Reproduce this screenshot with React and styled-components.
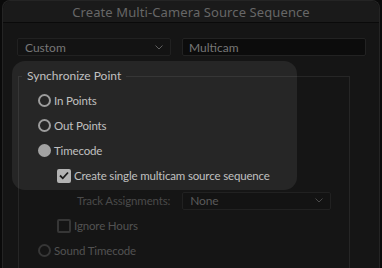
import React from "react";
import styled, { createGlobalStyle } from "styled-components";

const GlobalStyle = createGlobalStyle`
  html, body {
    margin: 0;
    padding: 0;
    background: #0a0a0a;
    font-family: Lato, "Noto Sans", sans-serif;
    overflow: hidden;
  }
`;

const Window = styled.div`
  position: relative;
  margin-left: 2px;
  width: 376px;
  height: 268px;
  background: #151515;
  border: 1px solid #242424;
  border-bottom: none;
  border-radius: 8px 8px 0 0;
  overflow: hidden;
`;

const TitleBar = styled.div`
  position: relative;
  z-index: 1;
  height: 21px;
  background: #1a1a1a;
  border-bottom: 1px solid #0a0a0a;
  border-radius: 8px 8px 0 0;
  display: flex;
  align-items: center;
  justify-content: center;
  color: #676767;
  font-family: "Noto Sans", sans-serif;
  font-size: 13px;
  letter-spacing: 0.1px;
`;

const Spotlight = styled.div`
  position: absolute;
  left: 9px;
  top: 60px;
  width: 285px;
  height: 129px;
  border-radius: 13px;
  background: #262626;
  z-index: 0;
`;

const Body = styled.div`
  position: relative;
  z-index: 1;
  padding: 15px 0 0 14px;
`;

const TopRow = styled.div`
  display: flex;
  gap: 11px;
`;

const Select = styled.div`
  box-sizing: border-box;
  width: ${p => p.$w}px;
  height: 18px;
  background: #131313;
  border: 1px solid #212121;
  border-radius: 2px;
  display: flex;
  align-items: center;
  justify-content: space-between;
  padding: 0 7px 0 7px;
  color: ${p => p.$color || "#777"};
  font-size: 12px;
`;

const TextField = styled.div`
  box-sizing: border-box;
  width: 184px;
  height: 18px;
  background: #0c0c0c;
  border: 1px solid #222;
  border-radius: 2px;
  display: flex;
  align-items: center;
  padding-left: 6px;
  color: #777;
  font-size: 12px;
`;

const Group = styled.fieldset`
  margin: 12px 0 0 1px;
  padding: 0;
  width: 330px;
  min-width: 0;
  border: 1px solid rgba(255, 255, 255, 0.075);
  border-radius: 0;
  height: 260px;
`;

const Legend = styled.legend`
  margin-left: 3px;
  padding: 0 5px;
  color: #c0c0c0;
  font-size: 12px;
  line-height: 16px;
`;

const GroupBody = styled.div`
  padding: 4px 0 0 19px;
`;

const Row = styled.div`
  height: 25px;
  display: flex;
  align-items: center;
  gap: 3px;
  padding-left: ${p => p.$indent || 0}px;
  color: ${p => (p.$dim ? "#525252" : "#c0c0c0")};
  font-size: 11.5px;
  letter-spacing: -0.15px;
`;

const Radio = styled.span`
  box-sizing: border-box;
  width: 13px;
  height: 13px;
  border-radius: 50%;
  flex: none;
  border: 2px solid ${p => (p.$dim ? "#363636" : "#9c9c9c")};
  background: ${p => (p.$checked ? "#a2a2a2" : "transparent")};
  ${p => p.$checked && "border-color: #a2a2a2;"}
`;

const Check = styled.span`
  box-sizing: border-box;
  width: 14px;
  height: 14px;
  border-radius: 2px;
  flex: none;
  display: flex;
  align-items: center;
  justify-content: center;
  border: 2px solid ${p => (p.$dim ? "#363636" : "#b3b3b3")};
  background: ${p => (p.$checked ? "#b3b3b3" : "transparent")};
`;

const FieldLabel = styled.span`
  color: #4a4a4a;
  font-size: 11.5px;
  margin-right: 9px;
`;

const Chevron = ({ color }) => (
  <svg width="8" height="5" viewBox="0 0 8 5">
    <path d="M0.5 0.5 L4 4 L7.5 0.5" fill="none" stroke={color} strokeWidth="1" />
  </svg>
);

const Tick = () => (
  <svg width="10" height="9" viewBox="0 0 10 9">
    <path d="M1 4.5 L3.8 7.3 L9 1.5" fill="none" stroke="#1c1c1c" strokeWidth="1.8" />
  </svg>
);

export default function App() {
  return (
    <>
      <GlobalStyle />
      <Window>
        <TitleBar>Create Multi-Camera Source Sequence</TitleBar>
        <Spotlight />
        <Body>
          <TopRow>
            <Select $w={154}>
              Custom
              <Chevron color="#5e5e5e" />
            </Select>
            <TextField>Multicam</TextField>
          </TopRow>
          <Group>
            <Legend>Synchronize Point</Legend>
            <GroupBody>
              <Row>
                <Radio />
                In Points
              </Row>
              <Row>
                <Radio />
                Out Points
              </Row>
              <Row>
                <Radio $checked />
                Timecode
              </Row>
              <Row $indent={19}>
                <Check $checked>
                  <Tick />
                </Check>
                Create single multicam source sequence
              </Row>
              <Row $indent={39} $dim>
                <FieldLabel>Track Assignments:</FieldLabel>
                <Select $w={149} $color="#5a5a5a">
                  None
                  <Chevron color="#4a4a4a" />
                </Select>
              </Row>
              <Row $indent={19} $dim>
                <Check $dim />
                Ignore Hours
              </Row>
              <Row $dim>
                <Radio $dim />
                Sound Timecode
              </Row>
            </GroupBody>
          </Group>
        </Body>
      </Window>
    </>
  );
}
